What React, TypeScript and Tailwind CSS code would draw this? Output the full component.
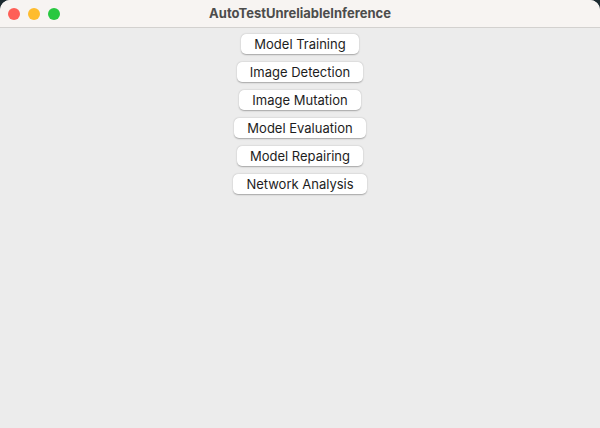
const buttons = [
  "Model Training",
  "Image Detection",
  "Image Mutation",
  "Model Evaluation",
  "Model Repairing",
  "Network Analysis",
];

export default function App() {
  return (
    <div className="h-[428px] w-[600px] bg-[#1c2a30]">
      <div className="flex h-full w-full flex-col overflow-hidden rounded-t-[10px] bg-[#ececec] font-['Inter','Liberation_Sans',sans-serif]">
        <div className="relative flex h-[28px] shrink-0 items-center justify-center border-b border-[#d3d1cf] bg-[#f7f4f2]">
          <div className="absolute left-[8px] top-[8px] flex gap-[8px]">
            <span className="h-[12px] w-[12px] rounded-full bg-[#fe5f57]" />
            <span className="h-[12px] w-[12px] rounded-full bg-[#febc2e]" />
            <span className="h-[12px] w-[12px] rounded-full bg-[#28c840]" />
          </div>
          <span className="text-[13px] font-bold text-[#4c4c4c]">
            AutoTestUnreliableInference
          </span>
        </div>
        <div className="flex flex-col items-center gap-[8px] pt-[6px]">
          {buttons.map((b) => (
            <button
              key={b}
              className="h-[20px] rounded-[5px] bg-white px-[13px] text-[13px] leading-[20px] text-[#1d1d1d] shadow-[0_0.5px_1.5px_rgba(0,0,0,0.3)]"
            >
              {b}
            </button>
          ))}
        </div>
      </div>
    </div>
  );
}
